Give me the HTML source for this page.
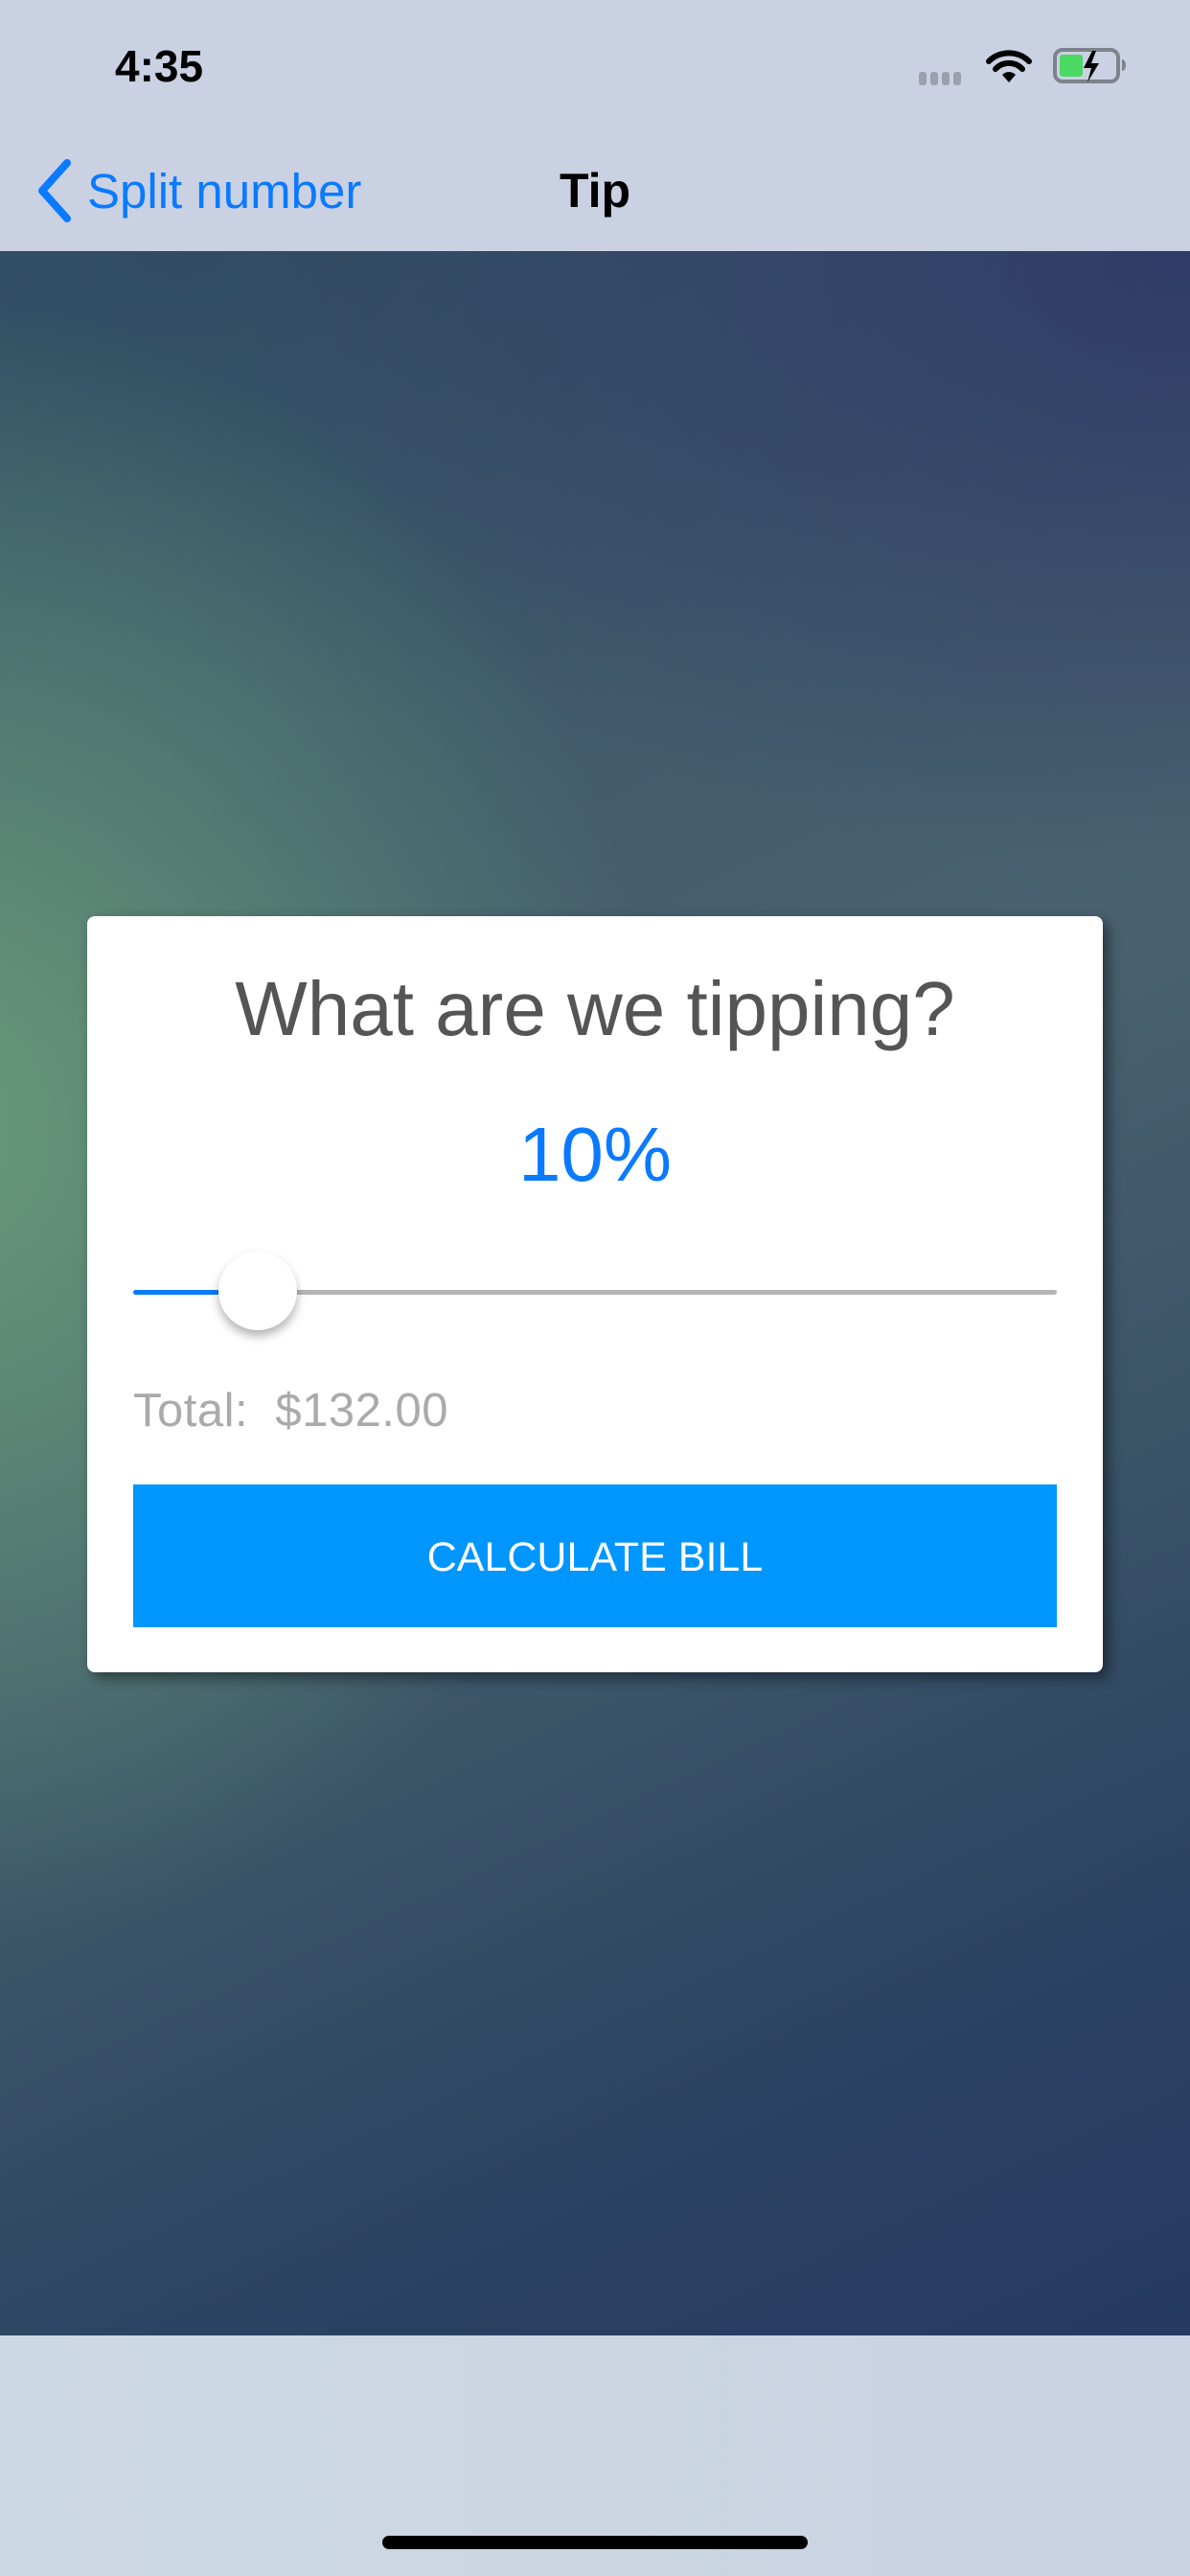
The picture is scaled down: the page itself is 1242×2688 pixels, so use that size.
<!DOCTYPE html>
<html><head><meta charset="utf-8"><style>
html,body{margin:0;padding:0;}
body{width:1242px;height:2688px;position:relative;overflow:hidden;background:#cbd2e2;font-family:"Liberation Sans",sans-serif;}
.top{position:absolute;left:0;top:0;width:1242px;height:262px;background:#cad1e2;}
.bg{position:absolute;left:0;top:262px;width:1242px;height:2175px;
background:
radial-gradient(ellipse 1000px 1150px at -5% 42%, rgba(104,155,122,1) 0%, rgba(95,140,118,0.7) 35%, rgba(80,120,115,0) 75%),
radial-gradient(ellipse 1000px 650px at 100% 0%, rgba(45,54,102,0.85) 0%, rgba(45,54,102,0) 100%),
radial-gradient(ellipse 900px 500px at 15% 0%, rgba(48,72,96,0.7) 0%, rgba(48,72,96,0) 100%),
linear-gradient(155deg,#35566a 0%,#3f5a6b 25%,#4a6270 45%,#3a5468 65%,#2b4462 82%,#263a62 100%);}
.bot{position:absolute;left:0;top:2437px;width:1242px;height:251px;background:linear-gradient(90deg,#cdd9e2,#cad3e3);}
.time{position:absolute;left:120px;top:42px;font-size:46px;font-weight:bold;color:#000;}
.back{position:absolute;left:91px;top:170px;font-size:51px;color:#0a7aff;}
.tip{position:absolute;left:0;width:1242px;text-align:center;top:170px;font-size:50px;font-weight:bold;color:#000;}
.card{position:absolute;left:91px;top:956px;width:1060px;height:789px;background:#fff;border-radius:8px;box-shadow:6px 6px 14px rgba(0,0,0,0.45);}
.t1{position:absolute;left:0;width:100%;text-align:center;top:1007px;font-size:80px;color:#555;}
.t2{position:absolute;left:0;width:100%;text-align:center;top:1159px;font-size:80px;color:#0a7aff;}
.track{position:absolute;left:139px;top:1346px;width:964px;height:5px;background:#b5b5b5;border-radius:3px;}
.fill{position:absolute;left:139px;top:1346px;width:130px;height:5px;background:#0a7aff;border-radius:3px;}
.thumb{position:absolute;left:228px;top:1306px;width:82px;height:82px;border-radius:50%;background:#fff;box-shadow:0 6px 10px rgba(0,0,0,0.3);}
.total{position:absolute;left:139px;top:1444px;font-size:49px;color:#aaa;white-space:pre;letter-spacing:0.5px;}
.btn{position:absolute;left:139px;top:1549px;width:964px;height:149px;background:#0096ff;color:#fff;font-size:43px;text-align:center;line-height:152px;}
.home{position:absolute;left:399px;top:2646px;width:444px;height:14px;border-radius:7px;background:#000;}
</style></head><body>
<div class="top"></div>
<div class="bg"></div>
<div class="bot"></div>
<div class="time">4:35</div>
<svg style="position:absolute;left:955px;top:48px" width="230" height="44" viewBox="0 0 230 44">
<rect x="4" y="27" width="8" height="14" rx="3" fill="#9aa0ad"/>
<rect x="16" y="27" width="8" height="14" rx="3" fill="#9aa0ad"/>
<rect x="28" y="27" width="8" height="14" rx="3" fill="#9aa0ad"/>
<rect x="40" y="27" width="8" height="14" rx="3" fill="#9aa0ad"/>
<path d="M77 16 a30 30 0 0 1 42 0" stroke="#000" stroke-width="6" fill="none" stroke-linecap="round"/>
<path d="M84 24 a19 19 0 0 1 28 0" stroke="#000" stroke-width="6" fill="none" stroke-linecap="round"/>
<path d="M98 38 l-7 -8 a10 10 0 0 1 14 0 z" fill="#000"/>
<rect x="146" y="4" width="66" height="33" rx="8" fill="none" stroke="#7d828c" stroke-width="4"/>
<rect x="151" y="9" width="24" height="23" rx="3" fill="#4cd964"/>
<path d="M216 14 v12 a4 6 0 0 0 0 -12z" fill="#7d828c"/>
<path d="M185 5 l-9 18 h8 l-4 15 l12 -20 h-8 l5 -13z" fill="#000"/>
</svg>
<svg style="position:absolute;left:36px;top:166px" width="42" height="66" viewBox="0 0 42 66"><path d="M34 4 L8 33 L34 62" stroke="#0a7aff" stroke-width="8" fill="none" stroke-linecap="round" stroke-linejoin="round"/></svg>
<div class="back">Split number</div>
<div class="tip">Tip</div>
<div class="card"></div>
<div class="t1">What are we tipping?</div>
<div class="t2">10%</div>
<div class="track"></div>
<div class="fill"></div>
<div class="thumb"></div>
<div class="total">Total:  $132.00</div>
<div class="btn">CALCULATE BILL</div>
<div class="home"></div>
</body></html>
